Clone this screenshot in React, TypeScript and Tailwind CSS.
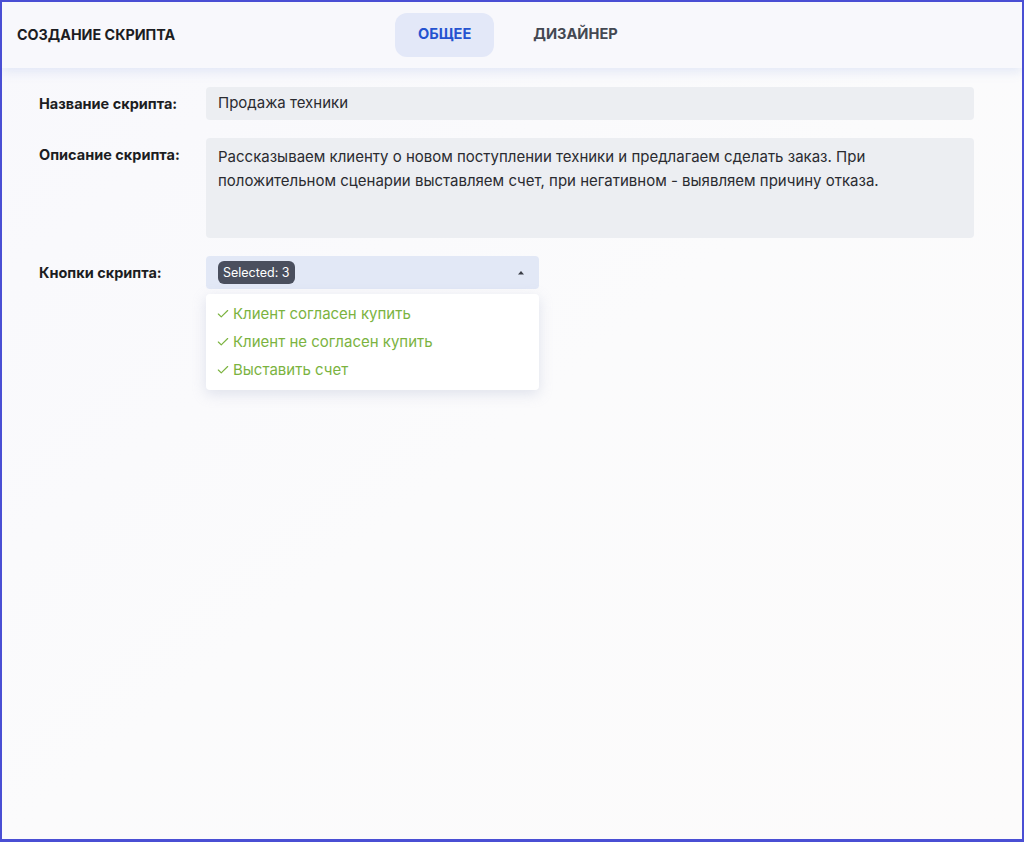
import { Check } from 'lucide-react'

const options = ['Клиент согласен купить', 'Клиент не согласен купить', 'Выставить счет']

export default function App() {
  return (
    <div
      className="flex h-[842px] w-[1024px] flex-col overflow-hidden border-2 border-b-[3px] border-[#4a4fd4] bg-gradient-to-br from-[#f8f8fc] via-[#fbfbfc] to-[#fcfbfb]"
      style={{ fontFamily: 'Inter, "Liberation Sans", sans-serif' }}
    >
      <header className="relative z-10 flex h-[66px] shrink-0 items-center bg-[#f8f8fc] pl-[15px] shadow-[0_4px_10px_rgba(200,210,240,0.45)]">
        <h1 className="w-[378px] text-[14.3px] font-bold text-[#1c1d22]">СОЗДАНИЕ СКРИПТА</h1>
        <nav className="flex items-center gap-4">
          <button
            type="button"
            className="h-[44px] rounded-xl bg-[#e3e8f8] px-[23px] text-[14.6px] font-bold text-[#2553d0]"
          >
            ОБЩЕЕ
          </button>
          <button type="button" className="h-[44px] px-[23px] text-[14.6px] font-bold text-[#444852]">
            ДИЗАЙНЕР
          </button>
        </nav>
      </header>

      <main className="flex flex-col gap-[18px] pl-[37px] pr-[48px] pt-[19px]">
        <div className="flex items-center">
          <label className="w-[167px] pt-px text-[14.5px] font-bold text-[#1c1d22]">Название скрипта:</label>
          <div className="flex h-[33px] flex-1 items-center rounded bg-[#eceef2] px-3 text-[15px] text-[#2a2b30]">
            Продажа техники
          </div>
        </div>

        <div className="flex items-start">
          <label className="w-[167px] pt-[6px] text-[14.5px] font-bold text-[#1c1d22]">Описание скрипта:</label>
          <div className="h-[100px] flex-1 rounded bg-[#eceef2] px-3 pt-[7px] text-[15px] leading-[24px] text-[#2a2b30]">
            Рассказываем клиенту о новом поступлении техники и предлагаем сделать заказ. При положительном сценарии
            выставляем счет, при негативном - выявляем причину отказа.
          </div>
        </div>

        <div className="flex items-start">
          <label className="w-[167px] pt-[6px] text-[14.5px] font-bold text-[#1c1d22]">Кнопки скрипта:</label>
          <div className="relative w-[333px]">
            <div className="flex h-[33px] items-center justify-between rounded bg-[#e2e8f6] pl-3 pr-[14px]">
              <span className="rounded-md bg-[#4a4f5e] px-[5px] py-[2px] text-[12.5px] leading-[19px] text-white">
                Selected: 3
              </span>
              <svg width="8" height="5" viewBox="0 0 8 5" className="fill-[#3a3d46]">
                <path d="M1 4.5 L4 1 L7 4.5 Z" />
              </svg>
            </div>
            <ul className="mt-[5px] flex flex-col rounded bg-white py-[6px] shadow-[0_4px_14px_rgba(160,170,200,0.3)]">
              {options.map((o) => (
                <li key={o} className="flex h-[28px] items-center gap-[3px] pl-[10px] text-[15px] text-[#7bb33f]">
                  <Check size={14} strokeWidth={2} />
                  {o}
                </li>
              ))}
            </ul>
          </div>
        </div>
      </main>
    </div>
  )
}
